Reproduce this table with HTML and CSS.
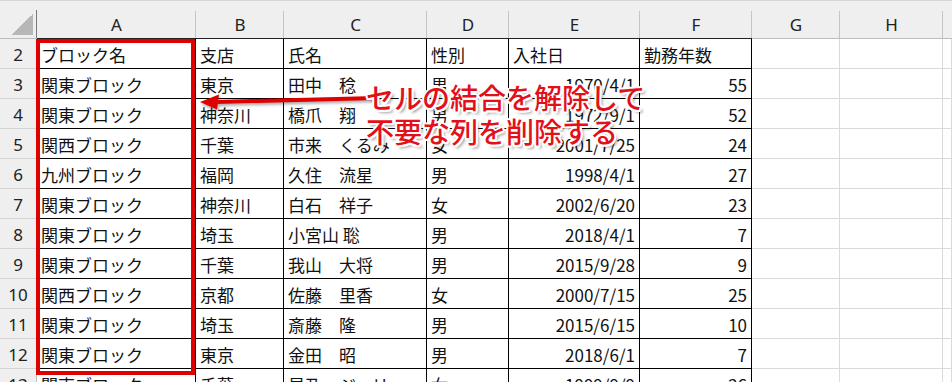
FILE: index.html
```html
<!DOCTYPE html>
<html lang="ja">
<head>
<meta charset="utf-8">
<link rel="stylesheet" href="styles.css">
</head>
<body>
<div class="page">
  <div class="sheet">
    <div class="ch corner"><span class="tri"></span></div>
    <div class="ch tb">A</div><div class="ch tb">B</div><div class="ch tb">C</div><div class="ch tb">D</div><div class="ch tb">E</div><div class="ch tb">F</div><div class="ch">G</div><div class="ch">H</div><div class="ch last"></div>

    <div class="rh">2</div><div class="c t">ブロック名</div><div class="c t">支店</div><div class="c t">氏名</div><div class="c t">性別</div><div class="c t">入社日</div><div class="c t">勤務年数</div><div class="c"></div><div class="c"></div><div class="c"></div>
    <div class="rh">3</div><div class="c t">関東ブロック</div><div class="c t">東京</div><div class="c t">田中　稔</div><div class="c t">男</div><div class="c t r">1970/4/1</div><div class="c t r">55</div><div class="c"></div><div class="c"></div><div class="c"></div>
    <div class="rh">4</div><div class="c t">関東ブロック</div><div class="c t">神奈川</div><div class="c t">橋爪　翔</div><div class="c t">男</div><div class="c t r">1972/9/1</div><div class="c t r">52</div><div class="c"></div><div class="c"></div><div class="c"></div>
    <div class="rh">5</div><div class="c t">関西ブロック</div><div class="c t">千葉</div><div class="c t">市来　くるみ</div><div class="c t">女</div><div class="c t r">2001/7/25</div><div class="c t r">24</div><div class="c"></div><div class="c"></div><div class="c"></div>
    <div class="rh">6</div><div class="c t">九州ブロック</div><div class="c t">福岡</div><div class="c t">久住　流星</div><div class="c t">男</div><div class="c t r">1998/4/1</div><div class="c t r">27</div><div class="c"></div><div class="c"></div><div class="c"></div>
    <div class="rh">7</div><div class="c t">関東ブロック</div><div class="c t">神奈川</div><div class="c t">白石　祥子</div><div class="c t">女</div><div class="c t r">2002/6/20</div><div class="c t r">23</div><div class="c"></div><div class="c"></div><div class="c"></div>
    <div class="rh">8</div><div class="c t">関東ブロック</div><div class="c t">埼玉</div><div class="c t">小宮山 聡</div><div class="c t">男</div><div class="c t r">2018/4/1</div><div class="c t r">7</div><div class="c"></div><div class="c"></div><div class="c"></div>
    <div class="rh">9</div><div class="c t">関東ブロック</div><div class="c t">千葉</div><div class="c t">我山　大将</div><div class="c t">男</div><div class="c t r">2015/9/28</div><div class="c t r">9</div><div class="c"></div><div class="c"></div><div class="c"></div>
    <div class="rh">10</div><div class="c t">関西ブロック</div><div class="c t">京都</div><div class="c t">佐藤　里香</div><div class="c t">女</div><div class="c t r">2000/7/15</div><div class="c t r">25</div><div class="c"></div><div class="c"></div><div class="c"></div>
    <div class="rh">11</div><div class="c t">関東ブロック</div><div class="c t">埼玉</div><div class="c t">斎藤　隆</div><div class="c t">男</div><div class="c t r">2015/6/15</div><div class="c t r">10</div><div class="c"></div><div class="c"></div><div class="c"></div>
    <div class="rh">12</div><div class="c t">関東ブロック</div><div class="c t">東京</div><div class="c t">金田　昭</div><div class="c t">男</div><div class="c t r">2018/6/1</div><div class="c t r">7</div><div class="c"></div><div class="c"></div><div class="c"></div>
    <div class="rh">13</div><div class="c t">関東ブロック</div><div class="c t">千葉</div><div class="c t">星乃　ジュリ</div><div class="c t">女</div><div class="c t r">1999/9/9</div><div class="c t r">26</div><div class="c"></div><div class="c"></div><div class="c"></div>
  </div>

  <div class="highlight"></div>

  <svg class="arrow" width="190" height="30" viewBox="0 0 190 30">
    <line x1="20" y1="14" x2="182" y2="10" stroke="#e00000" stroke-width="4"/>
    <polygon points="5,14 24,6.5 22,21.5" fill="#e00000"/>
  </svg>

  <div class="callout">セルの結合を解除して<br>不要な列を削除する</div>
</div>
</body>
</html>
```

FILE: styles.css
```css
* { box-sizing: border-box; }
html, body {
  margin: 0;
  padding: 0;
  background: #fff;
}
.page {
  position: relative;
  width: 952px;
  height: 382px;
  overflow: hidden;
  font-family: "Noto Sans CJK JP", "Noto Sans", sans-serif;
  color: #111;
}
.sheet {
  display: grid;
  grid-template-columns: 37px 159px 88px 143px 82px 131px 112px 88px 103px 1fr;
  grid-template-rows: 38px repeat(12, 30px);
  border-top: 1px solid #d6d6d6;
}
.ch {
  background: linear-gradient(#c4c4c4, #c4c4c4) right bottom / 1px 27px no-repeat, #efefef;
  border-bottom: 1px solid #bdbdbd;
  padding-top: 9px;
  display: flex;
  align-items: center;
  justify-content: center;
  font-family: "Noto Sans", sans-serif;
  font-size: 17px;
  color: #222;
}
.ch.tb { border-bottom-color: #222; }
.ch.last { background: #efefef; }
.corner {
  position: relative;
  background: linear-gradient(#7a7a7a, #7a7a7a) right bottom / 1px 28px no-repeat, #efefef;
}
.tri {
  position: absolute;
  left: 12px;
  top: 13px;
  width: 21px;
  height: 21px;
  background: linear-gradient(to bottom right, transparent 50%, #b7b7b7 50%);
}
.rh {
  background: #efefef;
  border-right: 1px solid #bdbdbd;
  border-bottom: 1px solid #d4d4d4;
  display: flex;
  align-items: center;
  justify-content: center;
  padding-top: 2px;
  font-family: "Noto Sans", sans-serif;
  font-size: 17px;
  color: #222;
}
.c {
  border-right: 1px solid #dadada;
  border-bottom: 1px solid #dadada;
  display: flex;
  align-items: center;
  padding: 2px 4px 0;
  font-size: 17px;
  white-space: nowrap;
  overflow: hidden;
}
.c.t {
  border-right-color: #000;
  border-bottom-color: #000;
}
.c.r { justify-content: flex-end; }

.highlight {
  position: absolute;
  left: 36px;
  top: 39px;
  width: 159px;
  height: 336px;
  border: 4px solid #df0000;
}
.arrow {
  position: absolute;
  left: 195px;
  top: 88px;
  filter: drop-shadow(1px 2px 1.5px rgba(0, 0, 0, 0.35));
}
.callout {
  position: absolute;
  left: 366px;
  top: 80px;
  font-family: "Noto Sans CJK JP", sans-serif;
  font-weight: 500;
  font-size: 28px;
  line-height: 34px;
  color: #e3101a;
  white-space: nowrap;
  text-shadow:
    2px 0 #fff, -2px 0 #fff, 0 2px #fff, 0 -2px #fff,
    1.5px 1.5px #fff, -1.5px 1.5px #fff, 1.5px -1.5px #fff, -1.5px -1.5px #fff,
    3px 3px 3px rgba(0, 0, 0, 0.4);
}
```
